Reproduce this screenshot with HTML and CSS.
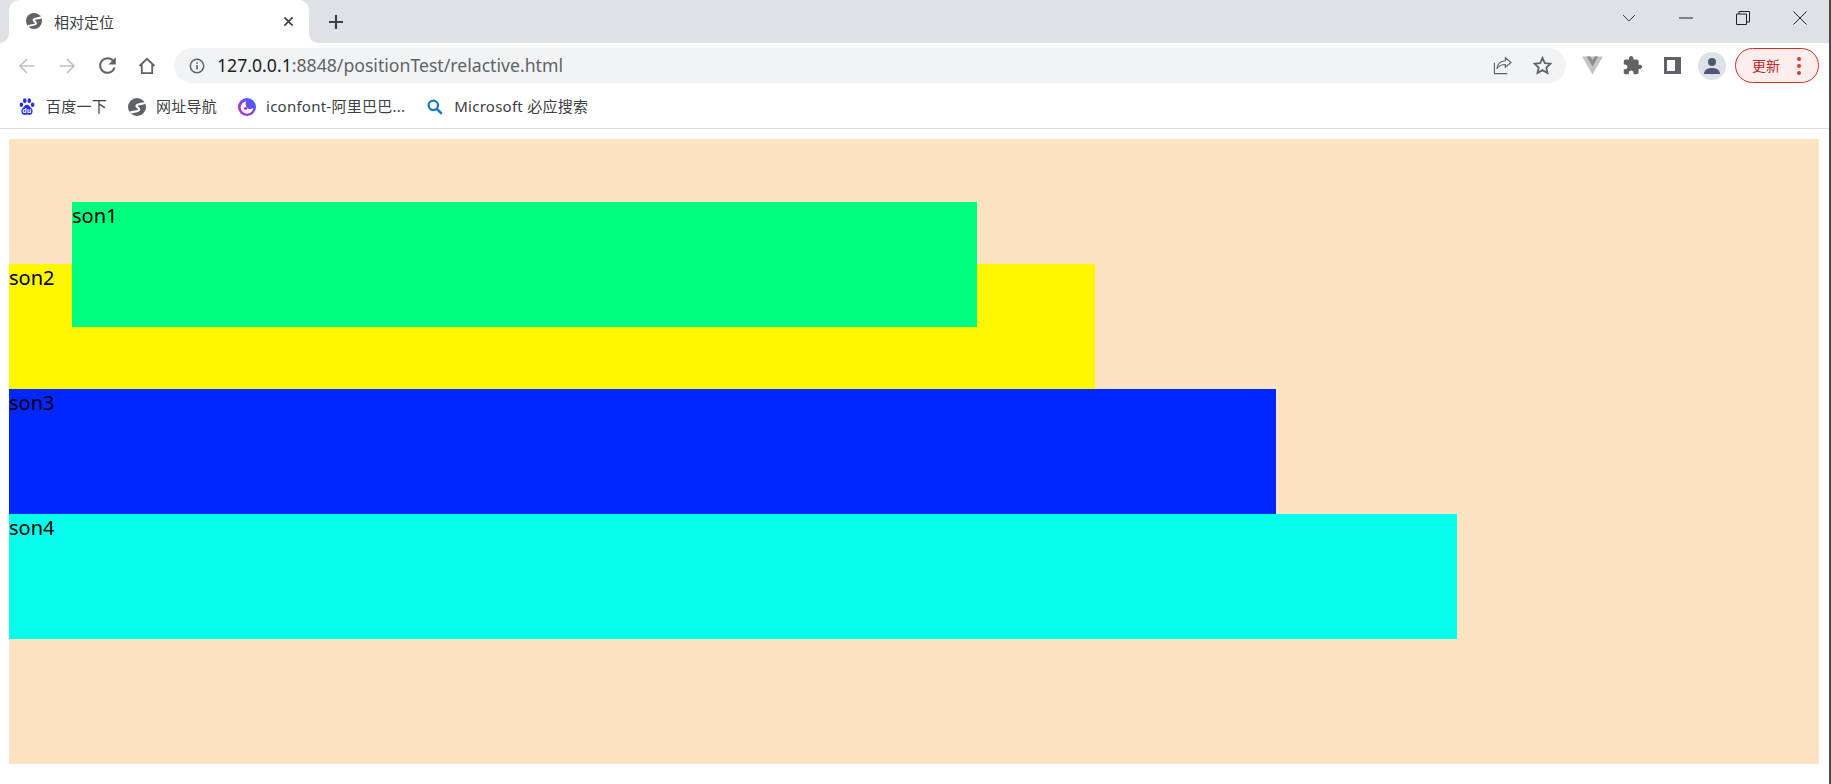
FILE: index.html
```html
<!DOCTYPE html>
<html lang="zh-CN">
<head>
  <meta charset="UTF-8">
  <title>相对定位</title>
  <link rel="stylesheet" href="styles.css">
</head>
<body>
  <div class="window">
    <!-- tab strip -->
    <div class="tabstrip">
      <div class="tab">
        <svg class="globe" viewBox="0 0 16 16"><circle cx="8" cy="8" r="8" fill="#5f6368"/><path d="M15 4.500C12 5.500 8.500 5 7.500 6.800 7 8.200 10 8.500 10 10.300 10 12.300 5.500 11.800 2 13" fill="none" stroke="#fff" stroke-width="1.900"/></svg>
        <span class="tab-title">相对定位</span>
        <svg class="tab-close" viewBox="0 0 12 12"><path d="M1.500 1.500l9 9M10.500 1.500l-9 9" stroke="#3c4043" stroke-width="1.700"/></svg>
      </div>
      <svg class="new-tab" viewBox="0 0 16 16"><path d="M8 1v14M1 8h14" stroke="#3c4043" stroke-width="2.200"/></svg>
      <div class="win-controls">
        <div class="win-btn"><svg width="14" height="8" viewBox="0 0 14 8"><path d="M1 1l6 6 6-6" fill="none" stroke="#3c4043"/></svg></div>
        <div class="win-btn"><svg width="14" height="2" viewBox="0 0 14 2"><path d="M0 1h14" stroke="#222" stroke-width="1"/></svg></div>
        <div class="win-btn"><svg width="14" height="14" viewBox="0 0 14 14"><path d="M.5 3h10v10.500H.5zM3 3V.5h10.500V11H10.500" fill="none" stroke="#222"/></svg></div>
        <div class="win-btn"><svg width="14" height="14" viewBox="0 0 14 14"><path d="M.5.500l13 13M13.500.500l-13 13" stroke="#222"/></svg></div>
      </div>
    </div>

    <!-- toolbar -->
    <div class="toolbar">
      <div class="tool"><svg width="18" height="18" viewBox="0 0 18 18"><path d="M16.500 9H2M9 2L2 9l7 7" fill="none" stroke="#bdc1c6" stroke-width="1.700"/></svg></div>
      <div class="tool"><svg width="18" height="18" viewBox="0 0 18 18"><path d="M1.500 9H16M9 2l7 7-7 7" fill="none" stroke="#bdc1c6" stroke-width="1.700"/></svg></div>
      <div class="tool"><svg width="25" height="25" viewBox="0 0 24 24"><path d="M17.650 6.350A7.958 7.958 0 0 0 12 4c-4.420 0-7.990 3.580-7.990 8s3.570 8 7.990 8c3.730 0 6.840-2.550 7.730-6h-2.080A5.990 5.990 0 0 1 12 18c-3.310 0-6-2.690-6-6s2.690-6 6-6c1.660 0 3.140.69 4.220 1.780L13 11h7V4l-2.350 2.350z" fill="#5f6368"/></svg></div>
      <div class="tool"><svg width="18" height="18" viewBox="0 0 18 18"><path d="M1.500 9L9 1.800 16.500 9M3.800 7.500v8.700h10.400V7.500" fill="none" stroke="#5f6368" stroke-width="1.800"/></svg></div>

      <div class="omnibox">
        <svg class="info" viewBox="0 0 16 16"><circle cx="8" cy="8" r="6.700" fill="none" stroke="#5f6368" stroke-width="1.500"/><path d="M8 7v4.500M8 4.300v1.500" stroke="#5f6368" stroke-width="1.600"/></svg>
        <div class="url"><span class="host">127.0.0.1</span>:8848/positionTest/relactive.html</div>
        <svg class="share" viewBox="0 0 20 20"><path d="M1.500 7v11.500h13.500" fill="none" stroke="#5f6368" stroke-width="1.200"/><path d="M13 1.800l6 5-6 5V9c-4 0-7 1-9 4.500C4.500 9 7.500 5.500 13 5z" fill="none" stroke="#5f6368" stroke-width="1.200"/></svg>
        <svg class="star" viewBox="0 0 18 18"><path d="M9 1.800l2.200 4.900 5.300.6-3.900 3.600 1.100 5.200L9 13.400l-4.700 2.700 1.100-5.200-3.900-3.600 5.300-.6z" fill="none" stroke="#5f6368" stroke-width="1.700"/></svg>
      </div>

      <div class="tool first-ext"><svg width="21" height="19" viewBox="0 0 20 18"><path d="M0 .500h20L10 17.500z" fill="#c4c4c4"/><path d="M4.500.500L10 10 15.500.500h-3.500L10 4 8 .500z" fill="#8c8c8c"/></svg></div>
      <div class="tool"><svg width="21" height="21" viewBox="0 0 24 24"><path d="M20.500 11H19V7c0-1.100-.9-2-2-2h-4V3.500C13 2.120 11.880 1 10.500 1S8 2.120 8 3.500V5H4c-1.100 0-1.990.9-1.990 2v3.800H3.500c1.490 0 2.700 1.210 2.700 2.700s-1.210 2.700-2.700 2.700H2V20c0 1.100.9 2 2 2h3.800v-1.500c0-1.490 1.210-2.700 2.700-2.700 1.490 0 2.700 1.210 2.700 2.700V22H17c1.100 0 2-.9 2-2v-4h1.500c1.380 0 2.500-1.120 2.500-2.500S21.880 11 20.500 11z" fill="#5f6368"/></svg></div>
      <div class="tool"><div class="side-panel"></div></div>
      <div class="tool">
        <div class="avatar"><svg width="18" height="18" viewBox="0 0 18 18"><circle cx="9" cy="5" r="4" fill="#4b5a72"/><path d="M1 17c0-4 3.500-6 8-6s8 2 8 6z" fill="#4b5a72"/></svg></div>
      </div>
      <div class="update"><span>更新</span><div class="dots"><i></i><i></i><i></i></div></div>
    </div>

    <!-- bookmarks -->
    <div class="bookmarks">
      <div class="mark">
        <svg viewBox="0 0 16 16"><g fill="#2932e1"><ellipse cx="3" cy="6" rx="1.600" ry="2.100"/><ellipse cx="6" cy="2.500" rx="1.600" ry="2.200"/><ellipse cx="10" cy="2.500" rx="1.600" ry="2.200"/><ellipse cx="13" cy="6" rx="1.600" ry="2.100"/><path d="M8 6c-2 0-2.500 2-4 3.200-1.500 1.300-1.500 5.800 1.500 5.800 1 0 1.700-.4 2.500-.4s1.500.4 2.500.4c3 0 3-4.500 1.500-5.800C10.500 8 10 6 8 6z"/></g><text x="8" y="13.500" text-anchor="middle" class="du">du</text></svg>
        <span>百度一下</span>
      </div>
      <div class="mark">
        <svg viewBox="0 0 16 16"><circle cx="8" cy="8" r="8" fill="#5f6368"/><path d="M15 4.500C12 5.500 8.500 5 7.500 6.800 7 8.200 10 8.500 10 10.300 10 12.300 5.500 11.800 2 13" fill="none" stroke="#fff" stroke-width="1.900"/></svg>
        <span>网址导航</span>
      </div>
      <div class="mark">
        <svg viewBox="0 0 20 20"><defs><linearGradient id="ic" x1="0" y1="1" x2="1" y2="0"><stop offset="0" stop-color="#c31de0"/><stop offset="1" stop-color="#2f6bff"/></linearGradient></defs><circle cx="10" cy="10" r="10" fill="url(#ic)"/><path d="M9 3.500a7 7 0 1 0 8 7.500c-2 2-6 1.500-7.500-1C8.300 8 8.300 5.500 9 3.500z" fill="#fff"/><circle cx="8.500" cy="11.500" r="1.800" fill="#e8288f"/></svg>
        <span>iconfont-阿里巴巴...</span>
      </div>
      <div class="mark">
        <svg viewBox="0 0 16 16"><circle cx="6.500" cy="6.500" r="4.200" fill="none" stroke="#1a78c8" stroke-width="2"/><path d="M9.800 9.800l4.200 4.200" stroke="#1a78c8" stroke-width="2.200"/></svg>
        <span>Microsoft 必应搜索</span>
      </div>
    </div>

    <!-- page -->
    <div class="page">
      <div class="father">
        <div class="son son1">son1</div>
        <div class="son son2">son2</div>
        <div class="son son3">son3</div>
        <div class="son son4">son4</div>
      </div>
    </div>
  </div>
</body>
</html>
```
FILE: styles.css
```css
* {
  margin: 0;
  padding: 0;
  box-sizing: border-box;
}

body {
  background: #fff;
  font-family: "Noto Sans", "Noto Sans CJK SC", sans-serif;
  overflow: hidden;
}

.window {
  width: 1831px;
  height: 784px;
  border-right: 2px solid #4a4a45;
}

.tabstrip {
  display: flex;
  align-items: center;
  height: 43px;
  background: #dee1e6;
}

.tab {
  position: relative;
  display: flex;
  align-items: center;
  align-self: stretch;
  width: 300px;
  margin-left: 9px;
  padding-left: 17px;
  background: #fff;
  border-radius: 10px 10px 0 0;
}

.tab:before,
.tab:after {
  content: '';
  position: absolute;
  bottom: 0;
  width: 9px;
  height: 9px;
  background: radial-gradient(circle at var(--cx) 0, #dee1e6 8.5px, #fff 9px);
}

.tab:before { left: -9px; --cx: 0; }
.tab:after  { right: -9px; --cx: 100%; }

.globe {
  width: 16px;
  height: 16px;
  margin-top: -2px;
}

.tab-title {
  margin-left: 12px;
  font-size: 15px;
  color: #3c4043;
}

.tab-close {
  width: 11px;
  height: 11px;
  margin-left: auto;
  margin-right: 15px;
}

.new-tab {
  width: 16px;
  height: 16px;
  margin-left: 19px;
}

.win-controls {
  display: flex;
  margin-left: auto;
  margin-right: 1px;
  margin-top: -8px;
}

.win-btn {
  display: flex;
  justify-content: center;
  align-items: center;
  width: 57px;
  height: 20px;
}

.toolbar {
  display: flex;
  align-items: center;
  height: 45px;
  padding-left: 7px;
}

.tool {
  display: flex;
  justify-content: center;
  align-items: center;
  width: 40px;
  height: 35px;
  flex: none;
}

.omnibox {
  display: flex;
  align-items: center;
  width: 1392px;
  height: 35px;
  margin-left: 7px;
  padding-left: 15px;
  background: #f1f3f4;
  border-radius: 18px;
  flex: none;
}

.info {
  width: 16px;
  height: 16px;
}

.url {
  margin-left: 12px;
  padding-bottom: 2px;
  font-size: 17.65px;
  color: #5f6368;
}

.host {
  color: #202124;
}

.share {
  width: 19px;
  height: 19px;
  margin-left: auto;
}

.star {
  width: 19px;
  height: 19px;
  margin-left: 21px;
  margin-right: 14px;
}

.first-ext {
  margin-left: 6px;
}

.side-panel {
  width: 17px;
  height: 17px;
  border: 3px solid #5f6368;
  border-right-width: 6px;
  background: #fff;
}

.avatar {
  display: flex;
  justify-content: center;
  align-items: center;
  width: 28px;
  height: 28px;
  background: #dee1e6;
  border-radius: 50%;
}

.update {
  display: flex;
  align-items: center;
  width: 84px;
  height: 35px;
  margin-left: 3px;
  padding-left: 16px;
  background: #fceeed;
  border: 1.500px solid #cf2f27;
  border-radius: 18px;
  flex: none;
  font-size: 14px;
  color: #c9281f;
}

.update span {
  margin-top: -2px;
}

.dots {
  display: flex;
  flex-direction: column;
  gap: 3px;
  margin-left: 17px;
}

.dots i {
  display: block;
  width: 4px;
  height: 4px;
  background: #e03a2f;
  border-radius: 50%;
}

.bookmarks {
  display: flex;
  align-items: center;
  height: 41px;
  padding-left: 18px;
  padding-bottom: 3px;
  border-bottom: 1px solid #d9dadc;
}

.mark {
  display: flex;
  align-items: center;
  gap: 10px;
  margin-right: 21px;
  font-size: 15px;
  letter-spacing: .25px;
  color: #3c4043;
}

.mark span {
  margin-top: -2px;
}

.mark svg {
  width: 18px;
  height: 18px;
  flex: none;
}

.du {
  font-family: "Liberation Sans", sans-serif;
  font-size: 6px;
  font-weight: bold;
  fill: #fff;
}

.page {
  padding: 10px 10px 0 9px;
}

.father {
  height: 625px;
  background: #fee3c3;
}

.son {
  height: 125px;
  font-size: 20px;
  line-height: 27px;
  color: #000;
}

.son1 {
  position: relative;
  top: 63px;
  left: 63px;
  width: 905px;
  background: #00ff7f;
  z-index: 1;
}

.son2 {
  width: 1086px;
  background: #fff700;
}

.son3 {
  width: 1267px;
  background: #0027ff;
}

.son4 {
  width: 1448px;
  background: #06ffeb;
}
```
